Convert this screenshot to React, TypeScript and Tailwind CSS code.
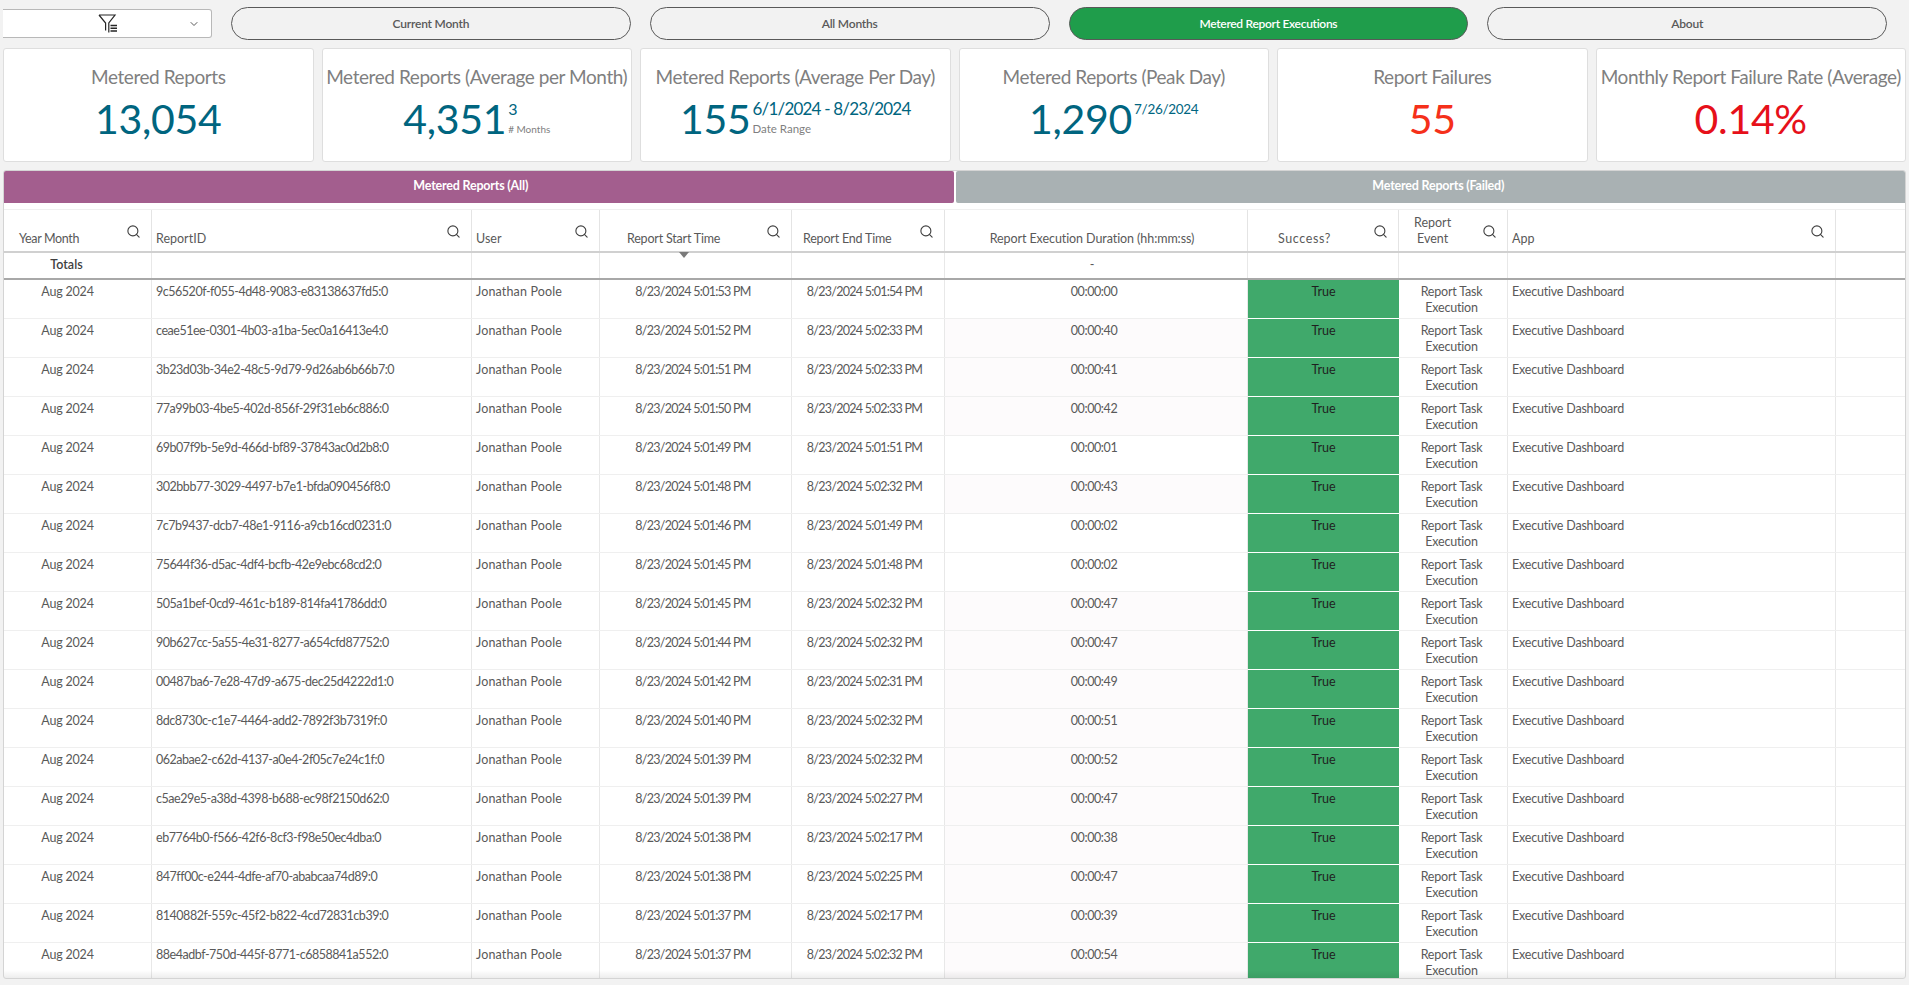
import React from 'react';
import { Search, ChevronDown } from 'lucide-react';

const gridCols = 'grid grid-cols-[148px_320px_128px_192px_153px_303px_151px_109px_328px_1fr]';

const reports: [string, string, string, string][] = [
  ['9c56520f-f055-4d48-9083-e83138637fd5:0', '5:01:53', '5:01:54', '00:00:00'],
  ['ceae51ee-0301-4b03-a1ba-5ec0a16413e4:0', '5:01:52', '5:02:33', '00:00:40'],
  ['3b23d03b-34e2-48c5-9d79-9d26ab6b66b7:0', '5:01:51', '5:02:33', '00:00:41'],
  ['77a99b03-4be5-402d-856f-29f31eb6c886:0', '5:01:50', '5:02:33', '00:00:42'],
  ['69b07f9b-5e9d-466d-bf89-37843ac0d2b8:0', '5:01:49', '5:01:51', '00:00:01'],
  ['302bbb77-3029-4497-b7e1-bfda090456f8:0', '5:01:48', '5:02:32', '00:00:43'],
  ['7c7b9437-dcb7-48e1-9116-a9cb16cd0231:0', '5:01:46', '5:01:49', '00:00:02'],
  ['75644f36-d5ac-4df4-bcfb-42e9ebc68cd2:0', '5:01:45', '5:01:48', '00:00:02'],
  ['505a1bef-0cd9-461c-b189-814fa41786dd:0', '5:01:45', '5:02:32', '00:00:47'],
  ['90b627cc-5a55-4e31-8277-a654cfd87752:0', '5:01:44', '5:02:32', '00:00:47'],
  ['00487ba6-7e28-47d9-a675-dec25d4222d1:0', '5:01:42', '5:02:31', '00:00:49'],
  ['8dc8730c-c1e7-4464-add2-7892f3b7319f:0', '5:01:40', '5:02:32', '00:00:51'],
  ['062abae2-c62d-4137-a0e4-2f05c7e24c1f:0', '5:01:39', '5:02:32', '00:00:52'],
  ['c5ae29e5-a38d-4398-b688-ec98f2150d62:0', '5:01:39', '5:02:27', '00:00:47'],
  ['eb7764b0-f566-42f6-8cf3-f98e50ec4dba:0', '5:01:38', '5:02:17', '00:00:38'],
  ['847ff00c-e244-4dfe-af70-ababcaa74d89:0', '5:01:38', '5:02:25', '00:00:47'],
  ['8140882f-559c-45f2-b822-4cd72831cb39:0', '5:01:37', '5:02:17', '00:00:39'],
  ['88e4adbf-750d-445f-8771-c6858841a552:0', '5:01:37', '5:02:32', '00:00:54'],
];

const FilterIcon = () => (
  <svg width="20" height="20" viewBox="0 0 20 20" fill="none" stroke="#262626" strokeWidth="1.2">
    <path d="M1 1h16l-6.2 8v9.5M1 1l6.6 8v7.5" />
    <path d="M12.5 11.5h6.5M12.5 14.3h6.5M12.5 17.1h6.5" strokeWidth="1.5" />
  </svg>
);

const NavButton = ({ label, active }: { label: string; active?: boolean }) => (
  <button
    className={`flex-1 h-[33px] rounded-[17px] border border-[#595959] text-[12px] font-semibold ${
      active ? 'bg-[#1f9d4b] text-white font-bold tracking-[-0.3px]' : 'bg-[#f2f2f2] text-[#595959] tracking-[-0.2px]'
    }`}
  >
    {label}
  </button>
);

const KpiCard = ({
  title,
  value,
  color = 'text-[#00657f]',
  children,
}: {
  title: string;
  value: string;
  color?: string;
  children?: React.ReactNode;
}) => (
  <div className="h-[114px] bg-white border border-[#dedede] rounded-[3px] flex flex-col items-center pt-[15px] overflow-hidden">
    <div className="text-[19px] leading-[26px] text-[#7f7f7f] whitespace-nowrap tracking-[-0.43px]">{title}</div>
    <div className="flex items-start mt-[5px]">
      <span className={`text-[41px] leading-[48px] tracking-[-0.3px] ${color}`}>{value}</span>
      {children}
    </div>
  </div>
);

const KpiSub = ({ main, label, mainClass }: { main: string; label?: string; mainClass: string }) => (
  <div className="flex flex-col pl-[2px] pt-[4px] whitespace-nowrap">
    <span className={`text-[#00657f] ${mainClass}`}>{main}</span>
    {label && <span className="text-[#7f7f7f] leading-[14px] mt-[3px]">{label}</span>}
  </div>
);

const HeaderCell = ({
  label,
  labelClass = '',
  noSearch,
}: {
  label: React.ReactNode;
  labelClass?: string;
  noSearch?: boolean;
}) => (
  <div className="flex items-end border-r border-[#e4e4e4] text-[#595959]">
    <div className={`flex-1 leading-[16px] pb-[4px] ${labelClass}`}>{label}</div>
    {!noSearch && <Search size={15} strokeWidth={1.8} className="self-start mt-[14px] mr-[10px] text-[#404040]" />}
  </div>
);

const cell = 'border-r border-[#e8e8e8] pt-[4px] leading-[16px]';

export default function App() {
  return (
    <div className="h-screen flex flex-col bg-[#f2f2f2] font-[Lato,sans-serif] text-[12.5px] text-[#595959] overflow-hidden">
      {/* nav */}
      <div className="flex items-center gap-[19px] pl-[3px] pr-[22px] pt-[7px]">
        <div className="w-[209px] h-[29px] bg-white border border-l-0 border-[#b8b8b8] rounded-r-[3px] flex items-center relative">
          <div className="ml-[95px]">
            <FilterIcon />
          </div>
          <ChevronDown size={12} className="absolute right-[11px] top-[8px] text-[#595959]" />
        </div>
        <NavButton label="Current Month" />
        <NavButton label="All Months" />
        <NavButton label="Metered Report Executions" active />
        <NavButton label="About" />
      </div>

      {/* kpis */}
      <div className="grid grid-cols-6 gap-[8px] px-[3px] mt-[8px]">
        <KpiCard title="Metered Reports" value="13,054" />
        <KpiCard title="Metered Reports (Average per Month)" value="4,351">
          <div className="text-[10px]">
            <KpiSub main="3" label="# Months" mainClass="text-[16px] leading-[20px]" />
          </div>
        </KpiCard>
        <KpiCard title="Metered Reports (Average Per Day)" value="155">
          <div className="text-[11.5px]">
            <KpiSub main="6/1/2024 - 8/23/2024" label="Date Range" mainClass="text-[17px] leading-[20px] tracking-[-0.8px]" />
          </div>
        </KpiCard>
        <KpiCard title="Metered Reports (Peak Day)" value="1,290">
          <KpiSub main="7/26/2024" mainClass="text-[13.5px] leading-[20px] tracking-[-0.3px]" />
        </KpiCard>
        <KpiCard title="Report Failures" value="55" color="text-[#f5301a]" />
        <KpiCard title="Monthly Report Failure Rate (Average)" value="0.14%" color="text-[#e6101a]" />
      </div>

      {/* table panel */}
      <div className="relative flex-1 min-h-0 mx-[3px] mt-[8px] mb-[6px] bg-white border border-[#d4d4d4] rounded-[3px] overflow-hidden">
        <div className="flex gap-[2px]">
          <div className="flex-1 h-[32px] bg-[#a35e8e] rounded-r-[2px] text-white font-bold text-[12.5px] tracking-[-0.2px] flex items-center justify-center pr-[16px] pb-[2px]">
            Metered Reports (All)
          </div>
          <div className="flex-1 h-[32px] bg-[#a9b1b3] rounded-l-[2px] text-white font-bold text-[12.5px] tracking-[-0.2px] flex items-center justify-center pl-[16px] pb-[2px]">
            Metered Reports (Failed)
          </div>
        </div>

        <div className={`${gridCols} relative mt-[6px] h-[44px] border-t border-[#f0f0f0] border-b-2 border-b-[#d0d0d0]`}>
          <HeaderCell label="Year Month" labelClass="pl-[15px] tracking-[-0.35px]" />
          <HeaderCell label="ReportID" labelClass="pl-[4px]" />
          <HeaderCell label="User" labelClass="pl-[4px]" />
          <HeaderCell label="Report Start Time" labelClass="pl-[27px] tracking-[-0.2px]" />
          <HeaderCell label="Report End Time" labelClass="pl-[11px] tracking-[-0.2px]" />
          <HeaderCell label="Report Execution Duration (hh:mm:ss)" labelClass="text-center pr-[8px] tracking-[-0.08px]" noSearch />
          <HeaderCell label="Success?" labelClass="pl-[30px] tracking-[0.6px]" />
          <HeaderCell label={<div className="w-fit text-center">Report<br />Event</div>} labelClass="pl-[15px]" />
          <HeaderCell label="App" labelClass="pl-[4px]" />
          <div />
          {/* sort marker */}
          <div className="absolute left-[675px] top-[42px] w-0 h-0 border-x-[5px] border-x-transparent border-t-[6px] border-t-[#7a7a7a]" />
        </div>

        <div className={`${gridCols} h-[27px] border-b-2 border-[#a8a8a8]`}>
          <div className="border-r border-[#e8e8e8] pr-[22px] text-center leading-[24px] font-semibold text-[#404040]">Totals</div>
          <div className="border-r border-[#e8e8e8]" />
          <div className="border-r border-[#e8e8e8]" />
          <div className="border-r border-[#e8e8e8]" />
          <div className="border-r border-[#e8e8e8]" />
          <div className="border-r border-[#e8e8e8] text-center leading-[24px] pr-[8px]">-</div>
          <div className="border-r border-[#e8e8e8]" />
          <div className="border-r border-[#e8e8e8]" />
          <div className="border-r border-[#e8e8e8]" />
          <div />
        </div>

        {reports.map(([id, start, end, duration]) => (
          <div key={id} className={`${gridCols} h-[39px] border-b border-[#efefef]`}>
            <div className={`${cell} pr-[20px] text-center tracking-[-0.2px]`}>Aug 2024</div>
            <div className={`${cell} pl-[4px] tracking-[-0.47px] whitespace-nowrap`}>{id}</div>
            <div className={`${cell} pl-[4px] tracking-[0.15px]`}>Jonathan Poole</div>
            <div className={`${cell} pr-[5px] text-center tracking-[-0.73px]`}>8/23/2024 {start} PM</div>
            <div className={`${cell} pr-[7px] text-center tracking-[-0.73px]`}>8/23/2024 {end} PM</div>
            <div className={`${cell} pr-[4px] text-center tracking-[-0.4px] ${duration > '00:00:30' ? 'bg-[#fdfbfc]' : ''}`}>{duration}</div>
            <div className="bg-[#40a96b] border-b border-white text-center pt-[4px] leading-[16px] text-[#1f1f1f] -mb-px">True</div>
            <div className={`${cell} border-l border-l-white text-center pl-[10px] pr-[14px] tracking-[-0.2px]`}>Report Task Execution</div>
            <div className={`${cell} pl-[4px] tracking-[-0.2px]`}>Executive Dashboard</div>
            <div />
          </div>
        ))}

        {/* fade at the bottom of the scroll area */}
        <div className="absolute inset-x-0 bottom-0 h-[8px] bg-gradient-to-b from-transparent to-[#00000012]" />
      </div>
    </div>
  );
}
